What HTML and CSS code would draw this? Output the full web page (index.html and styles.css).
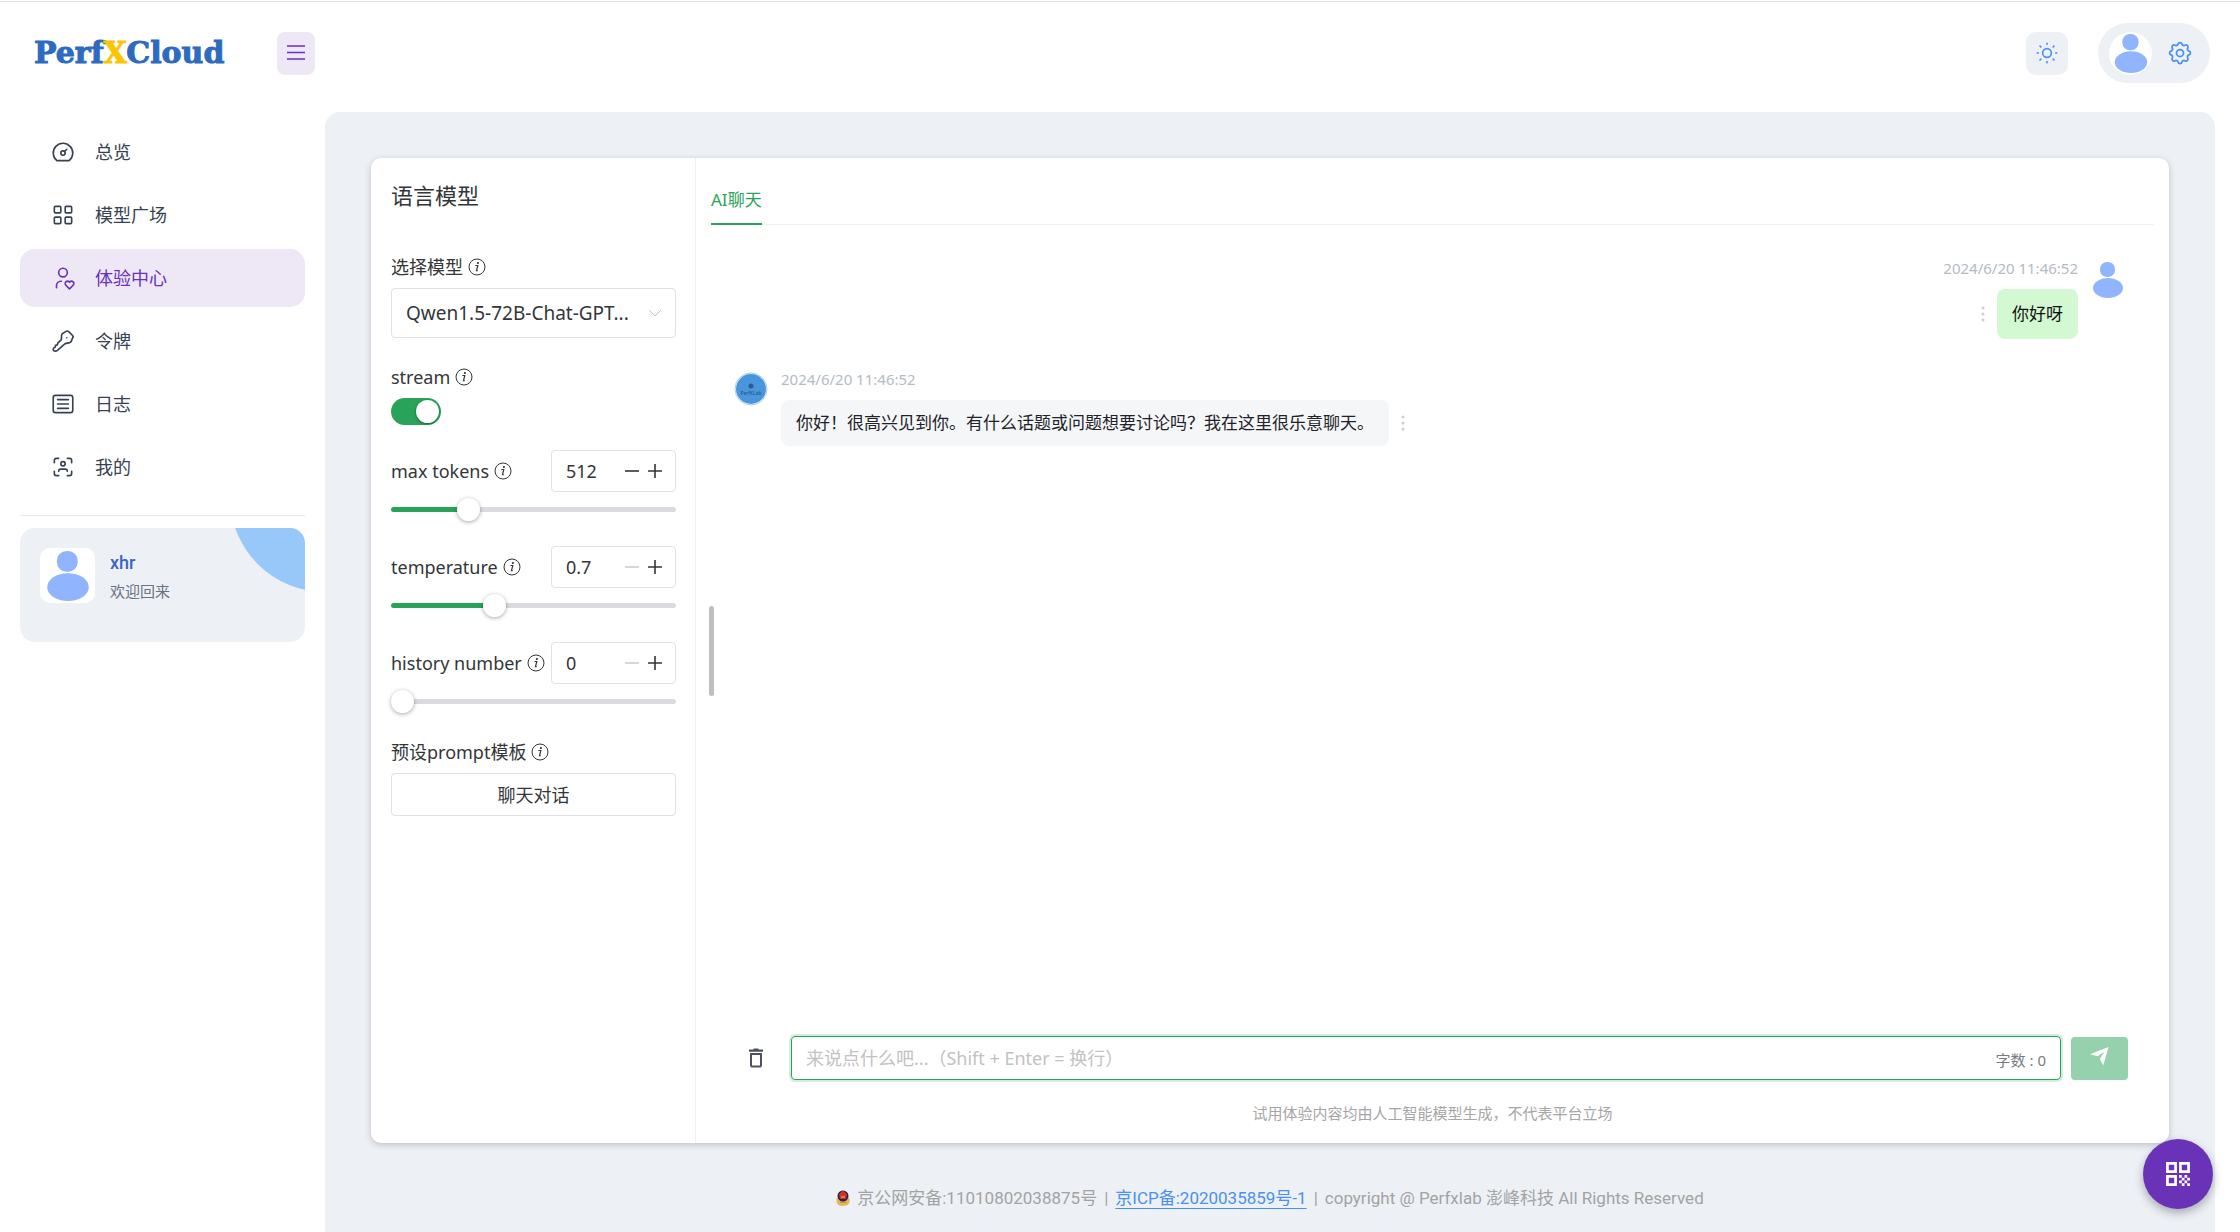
FILE: index.html
```html
<!DOCTYPE html>
<html lang="zh-CN">
<head>
<meta charset="utf-8">
<title>PerfXCloud</title>
<meta name="viewport" content="width=device-width, initial-scale=1">
<link rel="stylesheet" href="styles.css">
</head>
<body>
<svg width="0" height="0" class="sprite" aria-hidden="true">
  <symbol id="person" viewBox="0 0 32 36"><rect x="8" y="0" width="15" height="15" rx="7"/><ellipse cx="16" cy="26" rx="15" ry="10"/></symbol>
  <symbol id="info" viewBox="0 0 18 18"><circle cx="9" cy="9" r="8" fill="none" stroke="currentColor" stroke-width="1"/><circle cx="9.900" cy="5" r="1.100"/><path d="M7.400 7.500h2.400l-1.300 5.200h1.200" fill="none" stroke="currentColor" stroke-width="1.200"/></symbol>
  <symbol id="minus" viewBox="0 0 16 16"><path d="M1 8h14" stroke="currentColor" stroke-width="1.600"/></symbol>
  <symbol id="plus" viewBox="0 0 16 16"><path d="M1 8h14M8 1v14" stroke="currentColor" stroke-width="1.600"/></symbol>
  <symbol id="dots" viewBox="0 0 4 16"><circle cx="2" cy="2" r="1.500"/><circle cx="2" cy="8" r="1.500"/><circle cx="2" cy="14" r="1.500"/></symbol>
</svg>
<div class="app">
  <header class="topbar">
    <div class="brand">
      <a class="logo" href="#">Perf<span>X</span>Cloud</a>
      <button class="menu-toggle" type="button" aria-label="菜单"><svg viewBox="0 0 20 20"><path d="M1 3h18M1 9.500h18M1 16h18" /></svg></button>
    </div>
    <div class="tools">
      <button class="theme" type="button" aria-label="主题"><svg class="line" viewBox="0 0 24 24"><circle cx="12" cy="12" r="4"/><path d="M3 12h1m8 -9v1m8 8h1m-9 8v1m-6.400 -15.400l.7 .7m12.100 -.7l-.7 .7m0 11.400l.7 .7m-12.100 -.7l-.7 .7"/></svg></button>
      <button class="account" type="button" aria-label="账户"><span class="account-face"><svg><use href="#person"/></svg></span><svg class="line gear" viewBox="0 0 24 24"><path d="M10.325 4.317c.426 -1.756 2.924 -1.756 3.350 0a1.724 1.724 0 0 0 2.573 1.066c1.543 -.94 3.310 .826 2.370 2.370a1.724 1.724 0 0 0 1.065 2.572c1.756 .426 1.756 2.924 0 3.350a1.724 1.724 0 0 0 -1.066 2.573c.94 1.543 -.826 3.310 -2.370 2.370a1.724 1.724 0 0 0 -2.572 1.065c-.426 1.756 -2.924 1.756 -3.350 0a1.724 1.724 0 0 0 -2.573 -1.066c-1.543 .94 -3.310 -.826 -2.370 -2.370a1.724 1.724 0 0 0 -1.065 -2.572c-1.756 -.426 -1.756 -2.924 0 -3.350a1.724 1.724 0 0 0 1.066 -2.573c-.94 -1.543 .826 -3.310 2.370 -2.370c1 .608 2.296 .07 2.572 -1.065z"/><circle cx="12" cy="12" r="3"/></svg></button>
    </div>
  </header>
  <div class="body">
    <aside class="sidebar">
      <nav class="nav">
        <a href="#"><svg class="line" viewBox="0 0 24 24"><circle cx="12" cy="13" r="2"/><path d="M13.450 11.550l2.050 -2.050M6.400 20a9 9 0 1 1 11.200 0z"/></svg>总览</a>
        <a href="#"><svg class="line" viewBox="0 0 24 24"><rect x="4" y="4" width="6" height="6" rx="1"/><rect x="14" y="4" width="6" height="6" rx="1"/><rect x="4" y="14" width="6" height="6" rx="1"/><rect x="14" y="14" width="6" height="6" rx="1"/></svg>模型广场</a>
        <a href="#" class="active" aria-current="page"><svg class="line" viewBox="0 0 24 24"><circle cx="12" cy="7" r="4"/><path d="M6 21v-2a4 4 0 0 1 4 -4h.5M18 22l3.350 -3.284a2.143 2.143 0 0 0 .005 -3.071a2.242 2.242 0 0 0 -3.129 -.006l-.224 .22l-.223 -.22a2.242 2.242 0 0 0 -3.128 -.006a2.143 2.143 0 0 0 -.006 3.071l3.355 3.296z"/></svg>体验中心</a>
        <a href="#"><svg class="line" viewBox="0 0 24 24"><path d="M14.500 3.300c.9-.7 2-.6 2.800.1l3.300 3.300c.8.8.9 2 .1 2.800l-1 2.600c-.3.800-.8 1.200-1.600 1.400l-4.100.9-7.400 6.400c-.8.7-1.800.6-2.700.4-1-.2-1-1.300-.8-2.200.2-.8.900-1.200 1.800-1.200l.2-1.800 1.700-.4.300-1.600 3.400-3.300.2-4c.1-.8.5-1.400 1.300-1.800zM15.500 9h.01"/></svg>令牌</a>
        <a href="#"><svg class="line" viewBox="0 0 24 24"><rect x="3" y="4" width="18" height="16" rx="2"/><path d="M7 8h10M7 12h10M7 16h10"/></svg>日志</a>
        <a href="#"><svg class="line" viewBox="0 0 24 24"><circle cx="12" cy="9" r="2"/><path d="M4 8v-2a2 2 0 0 1 2 -2h2M4 16v2a2 2 0 0 0 2 2h2M16 4h2a2 2 0 0 1 2 2v2M16 20h2a2 2 0 0 0 2 -2v-2M8 16a2 2 0 0 1 2 -2h4a2 2 0 0 1 2 2"/></svg>我的</a>
      </nav>
      <div class="profile">
        <span class="profile-face"><svg><use href="#person"/></svg></span>
        <div><div class="profile-name">xhr</div><div class="profile-note">欢迎回来</div></div>
      </div>
    </aside>
    <main class="main">
      <div class="card">
        <section class="panel">
          <h1>语言模型</h1>
          <div class="field">
            <label for="model">选择模型<svg class="info"><use href="#info"/></svg></label>
            <div class="select"><select id="model"><option>Qwen1.5-72B-Chat-GPT...</option></select><svg viewBox="0 0 14 8"><path d="M1 1l6 6 6-6"/></svg></div>
          </div>
          <div class="field">
            <label for="stream">stream<svg class="info"><use href="#info"/></svg></label>
            <input class="switch" id="stream" type="checkbox" role="switch" checked>
          </div>
          <div class="field slider">
            <div class="row"><label for="tokens">max tokens<svg class="info"><use href="#info"/></svg></label>
              <div class="stepper"><input id="tokens" type="text" value="512"><button type="button" aria-label="减少"><svg><use href="#minus"/></svg></button><button type="button" aria-label="增加"><svg><use href="#plus"/></svg></button></div></div>
            <input type="range" aria-label="max tokens" min="0" max="2048" value="512" style="--fill:25%">
          </div>
          <div class="field slider">
            <div class="row"><label for="temp">temperature<svg class="info"><use href="#info"/></svg></label>
              <div class="stepper"><input id="temp" type="text" value="0.7"><button type="button" aria-label="减少" disabled><svg><use href="#minus"/></svg></button><button type="button" aria-label="增加"><svg><use href="#plus"/></svg></button></div></div>
            <input type="range" aria-label="temperature" min="0" max="2" step="0.1" value="0.7" style="--fill:35%">
          </div>
          <div class="field slider">
            <div class="row"><label for="history">history number<svg class="info"><use href="#info"/></svg></label>
              <div class="stepper"><input id="history" type="text" value="0"><button type="button" aria-label="减少" disabled><svg><use href="#minus"/></svg></button><button type="button" aria-label="增加"><svg><use href="#plus"/></svg></button></div></div>
            <input type="range" aria-label="history number" min="0" max="10" value="0" style="--fill:0%">
          </div>
          <div class="field">
            <label for="prompt">预设prompt模板<svg class="info"><use href="#info"/></svg></label>
            <button class="prompt" id="prompt" type="button">聊天对话</button>
          </div>
        </section>
        <section class="chat">
          <div class="resizer"></div>
          <div class="tabs" role="tablist"><button type="button" role="tab" aria-selected="true">AI聊天</button></div>
          <div class="messages">
            <article class="message mine">
              <svg class="user-face"><use href="#person"/></svg>
              <div class="content"><time>2024/6/20 11:46:52</time>
                <div class="line-row"><p>你好呀</p><button class="more" type="button" aria-label="更多"><svg><use href="#dots"/></svg></button></div></div>
            </article>
            <article class="message">
              <svg class="bot-face" viewBox="0 0 34 34"><circle cx="17" cy="17" r="16" fill="#fff" stroke="#a5c9ee"/><circle cx="17" cy="17" r="15" fill="#4996dc"/><circle cx="17" cy="14" r="2.500" fill="#2a5d96"/><text x="17" y="23" text-anchor="middle">PerfXLab</text></svg>
              <div class="content"><time>2024/6/20 11:46:52</time>
                <div class="line-row"><p>你好！很高兴见到你。有什么话题或问题想要讨论吗？我在这里很乐意聊天。</p><button class="more" type="button" aria-label="更多"><svg><use href="#dots"/></svg></button></div></div>
            </article>
          </div>
          <form class="composer">
            <button class="clear" type="button" aria-label="清空"><svg viewBox="0 0 24 24"><path fill-rule="evenodd" d="M5 3.500h4l1-1h4l1 1h4v2.200H5zM6 7h12v12.500a2 2 0 0 1-2 2H8a2 2 0 0 1-2-2zm2 2v10.500h8V9z"/></svg></button>
            <div class="entry"><input type="text" aria-label="消息" placeholder="来说点什么吧...（Shift + Enter = 换行）"><span>字数 : 0</span></div>
            <button class="send" type="button" aria-label="发送"><svg viewBox="0 0 20 20"><path d="M0 7.500L19.500 0 14 19.500 10.500 12.500 15 5 8 9.800z"/></svg></button>
          </form>
          <p class="notice">试用体验内容均由人工智能模型生成，不代表平台立场</p>
        </section>
      </div>
      <footer class="footer">
        <svg class="emblem" viewBox="0 0 14 16"><path d="M0.500 8h13v4q-1 4-6.500 4t-6.500-4z" fill="#e2b85a"/><circle cx="7" cy="6" r="5.500" fill="#25204d"/><path d="M7 .5l4 3.500-1 5H4L3 4z" fill="#d5301f"/><path d="M5 6.500h4v1H5z" fill="#e2b85a"/><path d="M4 12h6v1H4z" fill="#c98f35"/></svg>
        <span>京公网安备:11010802038875号</span><span>|</span><a href="#">京ICP备:2020035859号-1</a><span>|</span><span>copyright @ Perfxlab 澎峰科技 All Rights Reserved</span>
      </footer>
    </main>
  </div>
  <button class="fab" type="button" aria-label="二维码"><svg viewBox="0 0 24 24"><path fill-rule="evenodd" d="M1 1h10v10H1zm2.500 2.500v5h5v-5zM13 1h10v10H13zm2.500 2.500v5h5v-5zM1 13h10v10H1zm2.500 2.500v5h5v-5zM13 13h2.500v2.500H13zM18 13h2.500v2.500H18zM15.500 15.500H18V18h-2.500zM20.500 15.500H23V18h-2.500zM13 18h2.500v2.500H13zM18 18h2.500v2.500H18zM15.500 20.500H18V23h-2.500zM20.500 20.500H23V23h-2.500z"/></svg></button>
</div>
</body>
</html>
```
FILE: styles.css
```css
:root {
  --green: #29a35a;
  --purple: #6a32b6;
  --lilac: #ede7f6;
  --mist: #edf1f6;
  --ink: #333639;
  --face: #91b4ff;
  --line: #e0e0e6;
}

* { box-sizing: border-box; }

body {
  margin: 0;
  background: #fff;
  color: var(--ink);
  font-family: "Noto Sans", "Noto Sans CJK SC", sans-serif;
  font-size: 18px;
  line-height: 28px;
}

button, input, select { font: inherit; color: inherit; }
button { padding: 0; border: 0; background: none; cursor: pointer; }
h1, p { margin: 0; font-weight: 400; }
svg { display: block; fill: currentColor; }
.sprite { position: absolute; }
.line { fill: none; stroke: currentColor; stroke-width: 1.5; stroke-linecap: round; stroke-linejoin: round; }

.app { display: flex; flex-direction: column; min-height: 100vh; }

.topbar {
  display: flex;
  align-items: center;
  justify-content: space-between;
  height: 112px;
  padding: 0 30px 6px 34px;
  box-shadow: inset 0 1px #fff, inset 0 2px #dfe1e3;
}
.brand { display: flex; align-items: center; justify-content: space-between; width: 281px; }
.logo {
  color: #2c6bc0;
  font: bold 30px/40px "DejaVu Serif", serif;
  text-decoration: none;
  -webkit-text-stroke: 1px currentColor;
}
.logo span { color: #fec404; }
.menu-toggle { display: grid; place-items: center; width: 38px; height: 43px; border-radius: 8px; background: var(--lilac); color: var(--purple); }
.menu-toggle svg { width: 20px; height: 20px; stroke: currentColor; stroke-width: 1.5; }
.tools { display: flex; align-items: center; gap: 30px; }
.theme { display: grid; place-items: center; width: 42px; height: 43px; border-radius: 10px; background: var(--mist); color: #4a90f0; }
.theme svg { width: 26px; height: 26px; }
.account { display: flex; align-items: center; justify-content: space-between; width: 112px; height: 60px; padding: 0 16px 0 11px; border-radius: 30px; background: var(--mist); color: #4a90f0; }
.account-face { display: grid; place-items: center; width: 43px; height: 43px; border-radius: 50%; background: #fff; color: var(--face); }
.account-face svg { width: 36px; height: 39px; }
.gear { width: 28px; height: 28px; }

.body { display: flex; flex: 1; }
.sidebar { flex: 0 0 325px; padding: 11px 20px; }
.nav { display: flex; flex-direction: column; gap: 5px; padding-bottom: 19px; border-bottom: 1px solid #e6e6f0; }
.nav a {
  display: flex;
  align-items: center;
  gap: 19px;
  height: 58px;
  padding-left: 30px;
  border-radius: 15px;
  color: #364152;
  text-decoration: none;
}
.nav a.active { background: var(--lilac); color: var(--purple); }
.nav svg { width: 26px; height: 26px; }

.profile {
  position: relative;
  display: flex;
  gap: 15px;
  height: 114px;
  margin-top: 12px;
  padding: 20px;
  overflow: hidden;
  border-radius: 15px;
  background: var(--mist);
}
.profile::after {
  content: "";
  position: absolute;
  top: -126px;
  right: -115px;
  width: 190px;
  height: 190px;
  border-radius: 50%;
  background: #98c7f9;
}
.profile-face { display: grid; place-items: center; width: 55px; height: 55px; border-radius: 10px; background: #fff; color: var(--face); }
.profile-face svg { width: 46px; height: 50px; }
.profile-name { color: #3867c4; font: 500 18px/30px Roboto, sans-serif; }
.profile-note { color: #6b7280; font-size: 15px; line-height: 26px; }

.main {
  display: flex;
  flex: 1;
  flex-direction: column;
  min-width: 0;
  margin-right: 25px;
  padding: 46px 46px 0;
  border-radius: 15px 15px 0 0;
  background: var(--mist);
}
.card {
  display: flex;
  flex: 1;
  border-radius: 10px;
  background: #fff;
  box-shadow: 0 2px 7px rgba(0, 0, 0, .2);
}

.panel { display: flex; flex-direction: column; flex: 0 0 325px; gap: 25px; padding: 19px 19px 20px 20px; border-right: 1px solid #efeff5; }
.panel h1 { margin-bottom: 15px; font-size: 22px; line-height: 36px; }
.field { display: flex; flex-direction: column; gap: 7px; }
.slider { gap: 6px; }
.field label { display: flex; align-items: center; gap: 5px; white-space: nowrap; }
.info { width: 18px; height: 18px; }
.select { position: relative; }
.select select { display: block; width: 100%; height: 50px; padding: 0 36px 0 14px; border: 1px solid var(--line); border-radius: 4px; appearance: none; background: #fff; font-size: 19px; }
.select svg { position: absolute; top: 21px; right: 14px; width: 14px; height: 8px; fill: none; stroke: #c2c2c2; pointer-events: none; }
.switch { position: relative; width: 50px; height: 27px; margin: 0; border-radius: 14px; appearance: none; background: var(--green); }
.switch::after { content: ""; position: absolute; top: 2px; right: 2px; width: 23px; height: 23px; border-radius: 50%; background: #fff; box-shadow: 0 1px 3px rgba(0, 0, 0, .4); }
.row { display: flex; align-items: center; justify-content: space-between; }
.stepper { display: flex; align-items: center; gap: 7px; width: 125px; height: 42px; padding: 0 12px 0 14px; border: 1px solid var(--line); border-radius: 4px; }
.stepper input { flex: 1; min-width: 0; padding: 0; border: 0; outline: 0; }
.stepper button:disabled { color: #cfcfcf; }
.stepper svg { width: 16px; height: 16px; }
input[type="range"] { width: 100%; height: 23px; margin: 0; appearance: none; background: none; }
input[type="range"]::-webkit-slider-runnable-track { height: 5px; border-radius: 3px; background: linear-gradient(to right, var(--green) var(--fill), #dbdbdf var(--fill)); }
input[type="range"]::-webkit-slider-thumb { width: 23px; height: 23px; margin-top: -9px; border-radius: 50%; appearance: none; background: #fff; box-shadow: 0 1px 4px rgba(0, 0, 0, .35); }
.prompt { height: 43px; border: 1px solid var(--line); border-radius: 4px; }

.chat { position: relative; display: flex; flex: 1; flex-direction: column; min-width: 0; padding: 24px 15px 17px; }
.resizer { position: absolute; top: 448px; left: 13px; width: 5px; height: 90px; border-radius: 3px; background: #bfbfbf; }
.tabs { border-bottom: 1px solid #efeff5; }
.tabs button { height: 43px; padding-bottom: 6px; margin-bottom: -1px; border-bottom: 2px solid var(--green); color: var(--green); font-size: 17px; }
.messages { display: flex; flex: 1; flex-direction: column; gap: 27px; padding: 30px 30px 0 23px; }
.message { display: flex; gap: 13px; }
.message.mine { flex-direction: row-reverse; gap: 14px; }
.content { display: flex; flex-direction: column; gap: 8px; min-width: 0; }
.content time { color: #b4bbc4; font-size: 15px; line-height: 26px; }
.mine .content { align-items: flex-end; }
.line-row { display: flex; align-items: center; gap: 12px; }
.mine .line-row { flex-direction: row-reverse; }
.line-row p { padding: 10px 15px; border-radius: 8px; background: #f4f6f8; color: #1f2329; font-size: 17px; line-height: 26px; }
.mine p { background: #d2f9d1; color: #111; padding: 12px 15px; }
.more { color: #cfcfcf; }
.more svg { width: 4px; height: 16px; }
.user-face { width: 32px; height: 36px; margin-top: 7px; color: var(--face); }
.bot-face { width: 34px; height: 34px; margin-top: 6px; }
.bot-face text { fill: #244f83; font: 5px "Noto Sans", sans-serif; }

.composer { display: flex; align-items: center; gap: 10px; padding: 0 26px; }
.clear { margin: 0 13px 0 7px; color: #4e5260; }
.clear svg { width: 24px; height: 24px; }
.entry { display: flex; flex: 1; align-items: center; height: 44px; padding: 0 14px; border: 1px solid var(--green); border-radius: 4px; box-shadow: 0 0 0 2px rgba(41, 163, 90, .2); }
.entry input { flex: 1; min-width: 0; padding: 0; border: 0; outline: 0; background: none; }
.entry input::placeholder { color: #c2c2c2; }
.entry span { padding-top: 4px; color: #767c82; font-size: 15px; }
.send { display: grid; place-items: center; width: 57px; height: 43px; border-radius: 4px; background: #95d1ad; color: #fff; }
.send svg { width: 19px; height: 19px; margin-bottom: 3px; }
.notice { margin-top: 20px; color: #a6a6a6; font-size: 15px; line-height: 26px; text-align: center; }

.footer { display: flex; align-items: center; justify-content: center; gap: 7px; height: 89px; padding-top: 20px; color: #a3a3a3; font-family: Roboto, "Noto Sans CJK SC", sans-serif; font-size: 17px; white-space: nowrap; }
.footer a { color: #4a90f0; text-underline-offset: 4px; text-decoration-thickness: 1px; }
.emblem { width: 14px; height: 16px; }

.fab { position: fixed; right: 27px; bottom: 23px; display: grid; place-items: center; width: 70px; height: 70px; border-radius: 50%; background: var(--purple); color: #fff; box-shadow: 0 4px 10px rgba(0, 0, 0, .3); }
.fab svg { width: 26px; height: 26px; }
```
